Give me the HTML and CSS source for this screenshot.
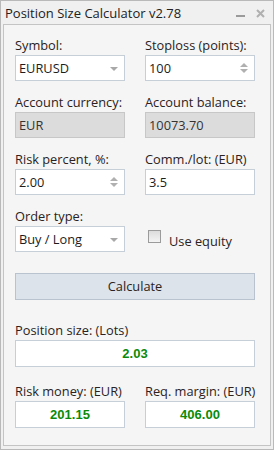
FILE: index.html
```html
<!DOCTYPE html>
<html>
<head>
<meta charset="utf-8">
<link rel="stylesheet" href="styles.css">
</head>
<body>
<div class="window">
  <div class="titlebar">
    <span class="title">Position Size Calculator v2.78</span>
    <span class="tb-btns">
      <svg class="min" width="10" height="10" viewBox="0 0 10 10"><rect x="0" y="7" width="9" height="2" fill="#9a9a9a"/></svg>
      <svg class="close" width="9" height="9" viewBox="0 0 9 9"><path d="M1 1 L8 8 M8 1 L1 8" stroke="#b0b0b0" stroke-width="2"/></svg>
    </span>
  </div>
  <div class="panel">
    <div class="grid">
      <div class="field">
        <div class="label">Symbol:</div>
        <div class="box select">EURUSD<span class="arrow"></span></div>
      </div>
      <div class="field">
        <div class="label">Stoploss (points):</div>
        <div class="box spin">100<span class="spinner"><i class="up"></i><i class="down"></i></span></div>
      </div>
      <div class="field">
        <div class="label">Account currency:</div>
        <div class="box disabled">EUR</div>
      </div>
      <div class="field">
        <div class="label">Account balance:</div>
        <div class="box disabled">10073.70</div>
      </div>
      <div class="field">
        <div class="label">Risk percent, %:</div>
        <div class="box spin">2.00<span class="spinner"><i class="up"></i><i class="down"></i></span></div>
      </div>
      <div class="field">
        <div class="label">Comm./lot: (EUR)</div>
        <div class="box">3.5</div>
      </div>
      <div class="field">
        <div class="label">Order type:</div>
        <div class="box select">Buy / Long<span class="arrow"></span></div>
      </div>
      <div class="field check-field">
        <span class="checkbox"></span><span class="check-label">Use equity</span>
      </div>
    </div>
    <div class="button">Calculate</div>
    <div class="field wide">
      <div class="label">Position size: (Lots)</div>
      <div class="box result">2.03</div>
    </div>
    <div class="grid last">
      <div class="field">
        <div class="label">Risk money: (EUR)</div>
        <div class="box result">201.15</div>
      </div>
      <div class="field">
        <div class="label">Req. margin: (EUR)</div>
        <div class="box result">406.00</div>
      </div>
    </div>
  </div>
</div>
</body>
</html>
```
FILE: styles.css
```css
* { box-sizing: border-box; }
html, body { margin: 0; padding: 0; background: #fff; }
body { font-family: "Open Sans", "Noto Sans", sans-serif; font-size: 12.8px; color: #2a2222; }

.window {
  width: 274px;
  height: 450px;
  border: 1px solid #b9b9b9;
  background: #f0f0f0;
  display: flex;
  flex-direction: column;
}
.titlebar {
  height: 23px;
  display: flex;
  align-items: center;
  justify-content: space-between;
  padding: 0 8px 0 4px;
}
.title { font-size: 13px; color: #222; }
.tb-btns { display: flex; align-items: center; gap: 10px; margin-top: 1px; }

.panel {
  margin: 0 2px 3px 2px;
  flex: 1;
  border: 1px solid #c4c4c4;
  background: #f5f5f5;
  padding: 12px 15px 0 11px;
}
.grid {
  display: grid;
  grid-template-columns: 110px 110px;
  column-gap: 20px;
  row-gap: 13px;
}
.label { height: 16px; line-height: 16px; margin-bottom: 2px; white-space: nowrap; }
.box {
  height: 26px;
  border: 1px solid #c6ced8;
  background: #fff;
  line-height: 24px;
  padding: 0 3px;
  position: relative;
  color: #1c1c1c;
}
.box.disabled { background: #dcdcdc; border-color: #c7c7c7; color: #333; }
.arrow {
  position: absolute;
  right: 6px;
  top: 11px;
  width: 0; height: 0;
  border-left: 4px solid transparent;
  border-right: 4px solid transparent;
  border-top: 4px solid #a8a8a8;
}
.spinner { position: absolute; right: 6px; top: 7px; display: flex; flex-direction: column; gap: 2px; }
.spinner i { display: block; width: 0; height: 0; border-left: 4px solid transparent; border-right: 4px solid transparent; }
.spinner .up { border-bottom: 4px solid #b0b0b0; }
.spinner .down { border-top: 4px solid #b0b0b0; }

.check-field { display: flex; align-items: flex-start; padding-top: 20px; padding-left: 3px; }
.checkbox {
  width: 13px; height: 13px;
  border: 1px solid #9b9b9b;
  background: linear-gradient(#dcdcdc, #f4f4f4);
  margin-top: 2px;
}
.check-label { margin-left: 8px; margin-top: 5px; line-height: 16px; }

.button {
  margin-top: 21px;
  width: 240px;
  height: 27px;
  border: 1px solid #b8c3cf;
  background: #dde3ea;
  text-align: center;
  line-height: 25px;
  color: #2a2222;
}
.wide { margin-top: 22px; width: 240px; }
.grid.last { margin-top: 16px; width: 240px; }
.box.result {
  height: 27px;
  line-height: 25px;
  text-align: center;
  font-family: "Liberation Sans", Arial, sans-serif;
  font-weight: bold;
  font-size: 13px;
  color: #0a8a0a;
}
```
